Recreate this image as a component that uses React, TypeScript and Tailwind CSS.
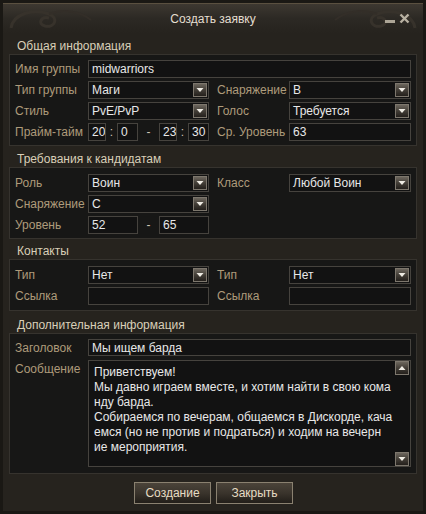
import React from "react";

const FONT = { fontFamily: '"Liberation Sans", Arial, sans-serif' };

const LBL = "shrink-0 text-[#ae9b7b] whitespace-nowrap";
const BOX = "h-[18px] border border-[#46433e] bg-[#121212] flex items-center text-[#e8e8e8] pl-[3px] whitespace-nowrap overflow-hidden";

function Arrow({ dir = "down" }: { dir?: "down" | "up" }) {
  return (
    <div className="w-[14px] h-[14px] shrink-0 border border-[#7d776d] bg-gradient-to-b from-[#6c665d] via-[#433e37] to-[#24201c] flex items-center justify-center">
      <svg width="8" height="6" viewBox="0 0 8 6">
        {dir === "down" ? (
          <polygon points="0.5,1 7.5,1 4,5" fill="#efece4" />
        ) : (
          <polygon points="0.5,5 7.5,5 4,1" fill="#efece4" />
        )}
      </svg>
    </div>
  );
}

function Select({ value, w }: { value: string; w: string }) {
  return (
    <div className={`${BOX} ${w} pr-[1px] justify-between`}>
      <span>{value}</span>
      <Arrow />
    </div>
  );
}

function Input({ value = "", w }: { value?: string; w: string }) {
  return (
    <div className={`${BOX} ${w}`}>
      <span>{value}</span>
    </div>
  );
}

function Header({ title }: { title: string }) {
  return (
    <div className="flex items-end pl-[14px] pb-[1px] text-[#d9cfb8] leading-[14px] flex-1">
      {title}
    </div>
  );
}

function Panel({ children, cls }: { children: React.ReactNode; cls: string }) {
  return (
    <div className={`mx-[6px] border border-[#36332e] bg-[#171716] pl-[5px] pr-[5px] flex flex-col gap-[3px] ${cls}`}>
      {children}
    </div>
  );
}

function Row({ children }: { children: React.ReactNode }) {
  return <div className="flex items-center h-[18px]">{children}</div>;
}

export default function App() {
  return (
    <div
      className="w-[426px] h-[514px] bg-[#1a1814] p-[3px] text-[12px]"
      style={FONT}
    >
      <div className="w-full h-full bg-[#26231e] flex flex-col border-t border-[#5a5040]">
        {/* Title bar */}
        <div className="h-[29px] shrink-0 relative flex items-center justify-center bg-gradient-to-b from-[#3d3831] via-[#2c2924] to-[#26231e]">
          <svg className="absolute left-0 top-0" width="90" height="29" viewBox="0 0 90 29">
            <path d="M8 24 C 10 10, 30 4, 46 10 C 56 14, 52 24, 42 22 C 34 20, 38 12, 46 14" fill="none" stroke="#37322b" strokeWidth="3" />
            <path d="M46 10 C 62 4, 78 8, 88 16" fill="none" stroke="#332e28" strokeWidth="2" />
          </svg>
          <svg className="absolute right-0 top-0" width="90" height="29" viewBox="0 0 90 29" style={{ transform: "scaleX(-1)" }}>
            <path d="M8 24 C 10 10, 30 4, 46 10 C 56 14, 52 24, 42 22 C 34 20, 38 12, 46 14" fill="none" stroke="#37322b" strokeWidth="3" />
            <path d="M46 10 C 62 4, 78 8, 88 16" fill="none" stroke="#332e28" strokeWidth="2" />
          </svg>
          <span className="relative text-[#e4ded0]">Создать заявку</span>
          <div className="absolute right-[13px] top-[9px] flex items-end gap-[4px]">
            <div className="w-[10px] h-[3px] bg-[#aca596] mb-[1px]" />
            <svg width="11" height="11" viewBox="0 0 11 11">
              <path d="M1.5 1.5 L9.5 9.5 M9.5 1.5 L1.5 9.5" stroke="#b8b1a2" strokeWidth="2.4" />
            </svg>
          </div>
        </div>

        {/* Общая информация */}
        <div className="h-[21px] flex shrink-0"><Header title="Общая информация" /></div>
        <Panel cls="pt-[5px] pb-[4px]">
          <Row>
            <span className={`${LBL} w-[73px]`}>Имя группы</span>
            <Input value="midwarriors" w="w-[323px]" />
          </Row>
          <Row>
            <span className={`${LBL} w-[73px]`}>Тип группы</span>
            <Select value="Маги" w="w-[121px]" />
            <span className={`${LBL} w-[72px] ml-[8px]`}>Снаряжение</span>
            <Select value="B" w="w-[122px]" />
          </Row>
          <Row>
            <span className={`${LBL} w-[73px]`}>Стиль</span>
            <Select value="PvE/PvP" w="w-[121px]" />
            <span className={`${LBL} w-[72px] ml-[8px]`}>Голос</span>
            <Select value="Требуется" w="w-[122px]" />
          </Row>
          <Row>
            <span className={`${LBL} w-[73px]`}>Прайм-тайм</span>
            <div className="w-[121px] flex items-center">
              <Input value="20" w="w-[18px]" />
              <span className="w-[11px] text-center text-[#cfc6b4]">:</span>
              <Input value="0" w="w-[21px]" />
              <span className="w-[21px] text-center text-[#cfc6b4]">-</span>
              <Input value="23" w="w-[18px]" />
              <span className="w-[11px] text-center text-[#cfc6b4]">:</span>
              <Input value="30" w="w-[21px]" />
            </div>
            <span className={`${LBL} w-[72px] ml-[8px]`}>Ср. Уровень</span>
            <Input value="63" w="w-[122px]" />
          </Row>
        </Panel>

        {/* Требования */}
        <div className="h-[21px] flex shrink-0"><Header title="Требования к кандидатам" /></div>
        <Panel cls="pt-[6px] pb-[4px]">
          <Row>
            <span className={`${LBL} w-[73px]`}>Роль</span>
            <Select value="Воин" w="w-[121px]" />
            <span className={`${LBL} w-[72px] ml-[8px]`}>Класс</span>
            <Select value="Любой Воин" w="w-[122px]" />
          </Row>
          <Row>
            <span className={`${LBL} w-[73px]`}>Снаряжение</span>
            <Select value="C" w="w-[121px]" />
          </Row>
          <Row>
            <span className={`${LBL} w-[73px]`}>Уровень</span>
            <div className="w-[121px] flex items-center">
              <Input value="52" w="w-[50px]" />
              <span className="w-[21px] text-center text-[#cfc6b4]">-</span>
              <Input value="65" w="w-[50px]" />
            </div>
          </Row>
        </Panel>

        {/* Контакты */}
        <div className="h-[20px] flex shrink-0"><Header title="Контакты" /></div>
        <Panel cls="pt-[6px] pb-[5px]">
          <Row>
            <span className={`${LBL} w-[73px]`}>Тип</span>
            <Select value="Нет" w="w-[121px]" />
            <span className={`${LBL} w-[72px] ml-[8px]`}>Тип</span>
            <Select value="Нет" w="w-[122px]" />
          </Row>
          <Row>
            <span className={`${LBL} w-[73px]`}>Ссылка</span>
            <Input w="w-[121px]" />
            <span className={`${LBL} w-[72px] ml-[8px]`}>Ссылка</span>
            <Input w="w-[122px]" />
          </Row>
        </Panel>

        {/* Дополнительная информация */}
        <div className="h-[22px] flex shrink-0"><Header title="Дополнительная информация" /></div>
        <div className="mx-[6px] border border-[#36332e] bg-[#171716] pl-[5px] pr-[5px] pt-[5px] pb-[6px] flex flex-col gap-[4px]">
          <div className="flex items-center h-[17px]">
            <span className={`${LBL} w-[73px]`}>Заголовок</span>
            <div className="h-[17px] w-[323px] border border-[#46433e] bg-[#121212] flex items-center text-[#e8e8e8] pl-[3px]">
              Мы ищем барда
            </div>
          </div>
          <div className="flex items-start h-[107px]">
            <span className={`${LBL} w-[73px]`}>Сообщение</span>
            <div className="h-[107px] w-[323px] border border-[#46433e] bg-[#121212] flex">
              <div className="flex-1 pl-[5px] pt-[4px] text-[#e8e8e8] leading-[15px] whitespace-nowrap overflow-hidden">
                <div>Приветствуем!</div>
                <div>Мы давно играем вместе, и хотим найти в свою кома</div>
                <div>нду барда.</div>
                <div>Собираемся по вечерам, общаемся в Дискорде, кача</div>
                <div>емся (но не против и подраться) и ходим на вечерн</div>
                <div>ие мероприятия.</div>
              </div>
              <div className="flex flex-col justify-between pr-[1px]">
                <Arrow dir="up" />
                <Arrow dir="down" />
              </div>
            </div>
          </div>
        </div>

        {/* Buttons */}
        <div className="flex justify-center gap-[5px] pt-[8px] pl-[1px]">
          <button className="w-[77px] h-[22px] border border-[#8a8170] bg-gradient-to-b from-[#4b443a] via-[#3a342c] to-[#221e19] text-[#e6dcc4] text-[12px]" style={FONT}>
            Создание
          </button>
          <button className="w-[77px] h-[22px] border border-[#8a8170] bg-gradient-to-b from-[#4b443a] via-[#3a342c] to-[#221e19] text-[#e6dcc4] text-[12px]" style={FONT}>
            Закрыть
          </button>
        </div>
      </div>
    </div>
  );
}
